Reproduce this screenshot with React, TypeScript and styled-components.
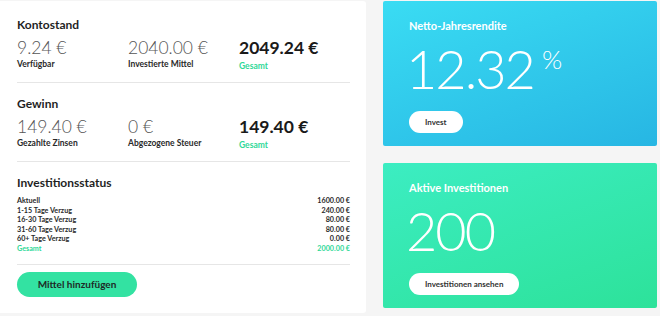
import React from 'react';
import styled, { createGlobalStyle } from 'styled-components';

const GlobalStyle = createGlobalStyle`
  html, body {
    margin: 0;
    padding: 0;
    background: #f5f5f5;
    font-family: 'Lato', 'Noto Sans', sans-serif;
    color: #222;
  }
`;

const Page = styled.div`
  display: grid;
  grid-template-columns: 366px 274px;
  column-gap: 17px;
  padding-top: 1px;
  width: 660px;
  height: 316px;
  box-sizing: border-box;
`;

const Card = styled.div`
  background: #fff;
  border-radius: 0 3px 3px 0;
  height: 312px;
  box-sizing: border-box;
  padding: 17px 16px 0 17px;
`;

const SectionTitle = styled.h3`
  margin: 0;
  font-size: 12px;
  line-height: 14px;
  font-weight: 700;
  color: #1f1f1f;
`;

const Figures = styled.div`
  display: grid;
  grid-template-columns: 111px 111px 111px;
  margin-top: 6px;
`;

const Figure = styled.div`
  display: flex;
  flex-direction: column;
`;

const Value = styled.div<{ $total?: boolean }>`
  font-size: 17.5px;
  line-height: 20px;
  font-weight: ${(p) => (p.$total ? 700 : 300)};
  color: ${(p) => (p.$total ? '#1a1a1a' : '#555')};
`;

const Label = styled.div<{ $green?: boolean }>`
  font-size: 8.5px;
  line-height: 12px;
  font-weight: 700;
  color: ${(p) => (p.$green ? '#2fd898' : '#2a2a2a')};
  margin-top: ${(p) => (p.$green ? '2px' : '0')};
`;

const Divider = styled.hr<{ $gap: number }>`
  border: none;
  border-top: 1.5px solid #e6e6e6;
  margin: ${(p) => p.$gap}px 0 14px;
`;

const StatusList = styled.div`
  margin-top: 6px;
  display: flex;
  flex-direction: column;
`;

const StatusRow = styled.div<{ $green?: boolean }>`
  display: flex;
  justify-content: space-between;
  font-size: 7.2px;
  line-height: 9.6px;
  font-weight: 700;
  color: ${(p) => (p.$green ? '#2fd898' : '#2a2a2a')};
`;

const PrimaryButton = styled.button`
  display: block;
  width: 120px;
  height: 25px;
  border: none;
  border-radius: 13px;
  background: #33e2a2;
  font-family: inherit;
  font-size: 10px;
  font-weight: 700;
  color: #1e2a26;
  cursor: pointer;
  margin-top: -7px;
`;

const Side = styled.div`
  display: flex;
  flex-direction: column;
  gap: 17px;
`;

const Tile = styled.div<{ $from: string; $to: string }>`
  height: 145px;
  border-radius: 2px;
  box-sizing: border-box;
  padding: 18px 26px 0;
  background: linear-gradient(160deg, ${(p) => p.$from}, ${(p) => p.$to});
  color: #fff;
  display: flex;
  flex-direction: column;
  align-items: flex-start;
`;

const TileTitle = styled.div`
  font-size: 11px;
  line-height: 14px;
  font-weight: 700;
`;

const BigNumber = styled.div`
  display: flex;
  align-items: flex-start;
  font-size: 54px;
  line-height: 60px;
  font-weight: 300;
  margin-top: 6px;
  margin-left: -3px;
  letter-spacing: -2px;
`;

const Unit = styled.span`
  font-size: 26px;
  line-height: 30px;
  margin: 5px 0 0 8px;
  letter-spacing: 0;
`;

const PillButton = styled.button`
  height: 22px;
  padding: 0 16px;
  border: none;
  border-radius: 11px;
  background: #fff;
  font-family: inherit;
  font-size: 8px;
  font-weight: 700;
  color: #333;
  margin-top: 12px;
  cursor: pointer;
`;

const statusRows = [
  ['Aktuell', '1600.00 €'],
  ['1-15 Tage Verzug', '240.00 €'],
  ['16-30 Tage Verzug', '80.00 €'],
  ['31-60 Tage Verzug', '80.00 €'],
  ['60+ Tage Verzug', '0.00 €'],
];

export default function App() {
  return (
    <>
      <GlobalStyle />
      <Page>
        <Card>
          <SectionTitle>Kontostand</SectionTitle>
          <Figures>
            <Figure>
              <Value>9.24 €</Value>
              <Label>Verfügbar</Label>
            </Figure>
            <Figure>
              <Value>2040.00 €</Value>
              <Label>Investierte Mittel</Label>
            </Figure>
            <Figure>
              <Value $total>2049.24 €</Value>
              <Label $green>Gesamt</Label>
            </Figure>
          </Figures>
          <Divider $gap={10} />
          <SectionTitle>Gewinn</SectionTitle>
          <Figures>
            <Figure>
              <Value>149.40 €</Value>
              <Label>Gezahlte Zinsen</Label>
            </Figure>
            <Figure>
              <Value>0 €</Value>
              <Label>Abgezogene Steuer</Label>
            </Figure>
            <Figure>
              <Value $total>149.40 €</Value>
              <Label $green>Gesamt</Label>
            </Figure>
          </Figures>
          <Divider $gap={10} />
          <SectionTitle>Investitionsstatus</SectionTitle>
          <StatusList>
            {statusRows.map(([name, amount]) => (
              <StatusRow key={name}>
                <span>{name}</span>
                <span>{amount}</span>
              </StatusRow>
            ))}
            <StatusRow $green>
              <span>Gesamt</span>
              <span>2000.00 €</span>
            </StatusRow>
          </StatusList>
          <Divider $gap={10} />
          <PrimaryButton>Mittel hinzufügen</PrimaryButton>
        </Card>
        <Side>
          <Tile $from="#3adcf3" $to="#27b6e3">
            <TileTitle>Netto-Jahresrendite</TileTitle>
            <BigNumber>
              12.32<Unit>%</Unit>
            </BigNumber>
            <PillButton>Invest</PillButton>
          </Tile>
          <Tile $from="#3cedc2" $to="#2de29a">
            <TileTitle>Aktive Investitionen</TileTitle>
            <BigNumber>200</BigNumber>
            <PillButton>Investitionen ansehen</PillButton>
          </Tile>
        </Side>
      </Page>
    </>
  );
}
